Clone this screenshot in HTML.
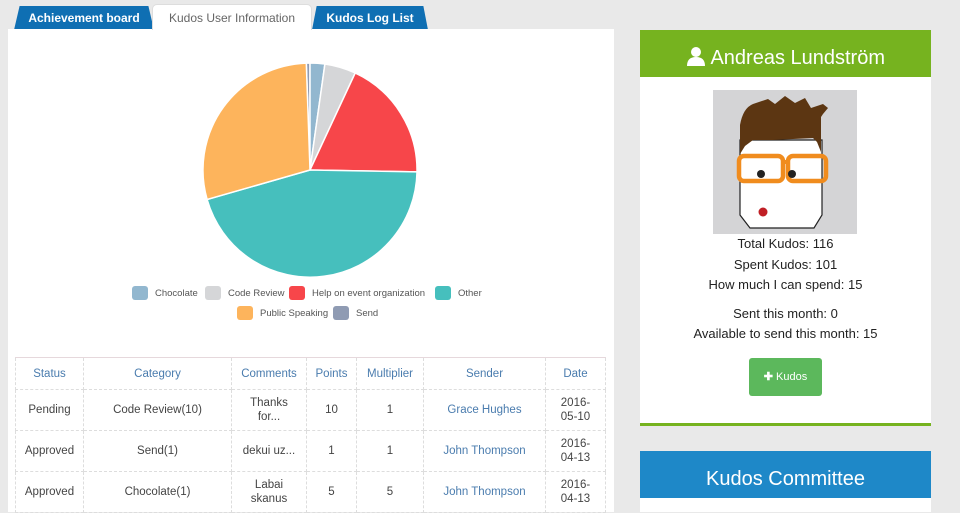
<!DOCTYPE html>
<html><head><style>
*{margin:0;padding:0;box-sizing:border-box}
body{width:960px;height:512px;background:#e9e9e9;font-family:"Liberation Sans",sans-serif;position:relative;overflow:hidden;color:#333}
.tab{position:absolute;top:6px;height:24px;font-size:12px;text-align:center;line-height:24px}
.blue{background:#0f6fb3;color:#fff;font-weight:bold;border-radius:5px 5px 0 0;clip-path:polygon(4% 0,96% 0,100% 100%,0 100%)}
#left{position:absolute;left:8px;top:29px;width:606px;height:483px;background:#fff}
table{position:absolute;left:15px;top:357px;border-collapse:collapse;font-size:11.5px;color:#444}
td,th{border:1px dashed #ddd;text-align:center;font-weight:normal;line-height:14px}
th{color:#4a7cae;height:32px;border-top:1px solid #e6d8dc}
td{height:41px}
a{color:#4a7cae}
.leg{position:absolute;font-size:9.5px;color:#555;display:flex;align-items:center}
.leg i{display:inline-block;width:16px;height:14px;border-radius:3px;margin-right:7px}
#right{position:absolute;left:640px;top:30px;width:291px;height:396px;background:#fff;border-bottom:3px solid #76b31f}
#rh{height:47px;background:#76b31f;color:#fff;font-size:20px;text-align:center;line-height:56px}
.st{text-align:center;font-size:13px;line-height:20.5px;color:#222}
</style></head><body>
<div class="tab blue" style="left:14px;width:140px">Achievement board</div>
<div class="tab" style="left:152px;width:160px;background:#fff;color:#666;border:1px solid #ddd;border-bottom:none;border-radius:5px 5px 0 0;top:4px;height:26px;line-height:26px;z-index:2">Kudos User Information</div>
<div class="tab blue" style="left:312px;width:116px">Kudos Log List</div>
<div id="left"></div>
<svg style="position:absolute;left:0;top:0" width="620" height="290">
<g stroke="#fff" stroke-width="1.5">
<path d="M310 170L306.3 63.1A107 107 0 0 1 310 63Z" fill="#8f9bb3"/>
<path d="M310 170L310 63A107 107 0 0 1 324.9 64Z" fill="#92b7cf"/>
<path d="M310 170L324.9 64A107 107 0 0 1 355.2 73Z" fill="#d5d6d8"/>
<path d="M310 170L355.2 73A107 107 0 0 1 417 171.9Z" fill="#f7464a"/>
<path d="M310 170L417 171.9A107 107 0 0 1 207.1 199.5Z" fill="#46bfbd"/>
<path d="M310 170L207.1 199.5A107 107 0 0 1 306.3 63.1Z" fill="#fdb45c"/>
</g></svg>
<div class="leg" style="left:132px;top:286px"><i style="background:#92b7cf"></i>Chocolate</div>
<div class="leg" style="left:205px;top:286px"><i style="background:#d5d6d8"></i>Code Review</div>
<div class="leg" style="left:289px;top:286px"><i style="background:#f7464a"></i>Help on event organization</div>
<div class="leg" style="left:435px;top:286px"><i style="background:#46bfbd"></i>Other</div>
<div class="leg" style="left:237px;top:306px"><i style="background:#fdb45c"></i>Public Speaking</div>
<div class="leg" style="left:333px;top:306px"><i style="background:#8f9bb3"></i>Send</div>
<table>
<tr><th style="width:68px">Status</th><th style="width:148px">Category</th><th style="width:75px">Comments</th><th style="width:50px">Points</th><th style="width:67px">Multiplier</th><th style="width:122px">Sender</th><th style="width:60px">Date</th></tr>
<tr><td>Pending</td><td>Code Review(10)</td><td>Thanks<br>for...</td><td>10</td><td>1</td><td><a>Grace Hughes</a></td><td>2016-<br>05-10</td></tr>
<tr><td>Approved</td><td>Send(1)</td><td>dekui uz...</td><td>1</td><td>1</td><td><a>John Thompson</a></td><td>2016-<br>04-13</td></tr>
<tr><td>Approved</td><td>Chocolate(1)</td><td>Labai<br>skanus</td><td>5</td><td>5</td><td><a>John Thompson</a></td><td>2016-<br>04-13</td></tr>
</table>
<div id="right">
<div id="rh"><svg width="20" height="20" viewBox="0 0 20 20" style="vertical-align:-2px"><circle cx="10" cy="6" r="5" fill="#fff"/><path d="M1 20Q1 11 10 11Q19 11 19 20Z" fill="#fff"/></svg> Andreas Lundström</div>
<svg style="position:absolute;left:73px;top:60px" width="144" height="144" viewBox="0 0 144 144">
<rect width="144" height="144" fill="#d4d4d6"/>
<path d="M27 50L27 125L37 138L101 138L109 125L109 50Z" fill="#fff" stroke="#222" stroke-width="1.2"/>
<path d="M27 64L27 35Q30 18 40 14L55 9L62 14L72 6L82 13L92 8L98 18L110 14L115 18L110 24L108 27L108 62L104 52L100 48L60 50L40 50L32 56Z" fill="#5c3612"/>
<rect x="26" y="66" width="44" height="25" rx="5" fill="none" stroke="#f08c1e" stroke-width="4.5"/>
<rect x="75" y="66" width="38" height="25" rx="5" fill="none" stroke="#f08c1e" stroke-width="4.5"/>
<path d="M69 72H76" stroke="#f08c1e" stroke-width="4"/>
<circle cx="48" cy="84" r="4" fill="#222"/><circle cx="79" cy="84" r="4" fill="#222"/>
<circle cx="50" cy="122" r="4.5" fill="#c01f25"/>
</svg>
<div style="position:absolute;top:204px;width:100%">
<div class="st">Total Kudos: 116</div>
<div class="st">Spent Kudos: 101</div>
<div class="st">How much I can spend: 15</div>
<div class="st" style="margin-top:8px">Sent this month: 0</div>
<div class="st">Available to send this month: 15</div>
</div>
<div style="position:absolute;left:109px;top:328px;width:73px;height:38px;background:#5cb85c;border-radius:3px;color:#fff;font-size:11px;text-align:center;line-height:38px"><b>✚</b> Kudos</div>
</div>
<div style="position:absolute;left:640px;top:451px;width:291px;height:61px;background:#fff">
<div style="height:47px;background:#1e88c8;color:#fff;font-size:20px;text-align:center;line-height:56px">Kudos Committee</div></div>
</body></html>
